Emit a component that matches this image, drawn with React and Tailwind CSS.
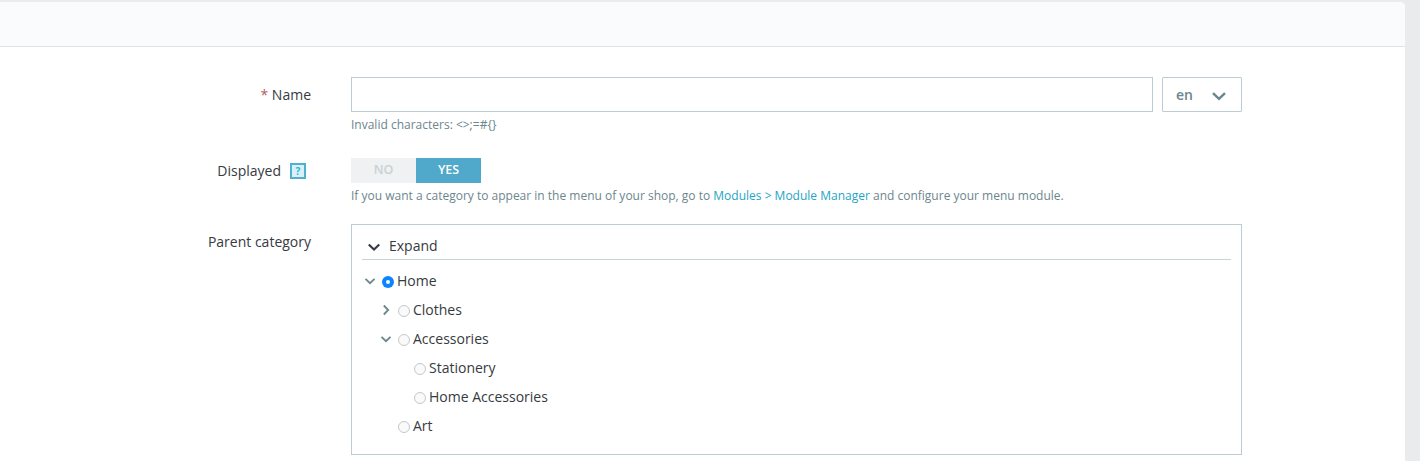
const FONT = "font-['Open_Sans',sans-serif]";

function Chevron({ dir = "down", size = 12, className = "" }) {
  return (
    <svg width={size} height={size} viewBox="0 0 12 12" fill="none" className={className}>
      {dir === "down" ? (
        <path d="M1.5 3.8 6 8.2l4.5-4.4" stroke="currentColor" strokeWidth="1.8" />
      ) : (
        <path d="M3.8 1.5 8.2 6l-4.4 4.5" stroke="currentColor" strokeWidth="1.8" />
      )}
    </svg>
  );
}

function Radio({ checked }) {
  return checked ? (
    <span className="w-3 h-3 mt-[2px] rounded-full bg-[#0a84ff] flex items-center justify-center shrink-0">
      <span className="w-1 h-1 rounded-full bg-white" />
    </span>
  ) : (
    <span className="w-3 h-3 mt-[2px] rounded-full border border-[#c4c8ca] bg-[#fafafa] shrink-0" />
  );
}

function TreeRow({ indent, chevron, checked, label }) {
  return (
    <div className={`h-[29px] flex items-center ${indent}`}>
      <span className="w-[12px] mr-[6px] shrink-0 flex justify-center text-[#6c868e]">
        {chevron && <Chevron dir={chevron} />}
      </span>
      <Radio checked={checked} />
      <span className="ml-[3px] text-[14px] text-[#363a41]">{label}</span>
    </div>
  );
}

function Row({ label, className = "", children }) {
  return (
    <div className={`flex ${className}`}>
      <div className="w-[311px] shrink-0 text-right text-[14px] text-[#363a41]">{label}</div>
      <div className="ml-[40px] w-[891px]">{children}</div>
    </div>
  );
}

export default function App() {
  return (
    <div className={`${FONT} w-[1420px] h-[461px] overflow-hidden bg-[#e9ebed] pt-[2px]`}>
      <div className="w-[1405px] h-[459px] bg-white rounded-tr-[5px] overflow-hidden">
        <div className="h-[45px] bg-[#fafbfc] border-b border-[#dbe6e9]" />
        <Row className="mt-[30px]" label={
          <div className="leading-[19px] pt-[8px]"><span className="text-[#b5605f]">*</span> Name</div>
        }>
          <div className="flex">
            <div className="w-[802px] h-[35px] border border-[#bbcdd2] bg-white" />
            <div className="ml-[9px] w-[80px] h-[35px] border border-[#bbcdd2] rounded-[1px] flex items-center pl-[13px] text-[#6c868e]">
              <span className="text-[14px] font-semibold">en</span>
              <Chevron size={16} className="ml-[18px] mt-[3px]" />
            </div>
          </div>
          <p className="mt-[5px] text-[12px] leading-[16px] text-[#6c868e]">{"Invalid characters: <>;=#{}"}</p>
        </Row>
        <Row className="mt-[25px]" label={
          <div className="flex justify-end items-center h-[25px] pr-[5px]">
            <span>Displayed</span>
            <span className="ml-[9px] w-[16px] h-[16px] border-2 border-[#4fb0cf] bg-[#d9f0f7] text-[#25b9d7] text-[10px] font-bold flex items-center justify-center leading-none">?</span>
          </div>
        }>
          <div className="flex h-[25px] w-[130px] text-[12.5px] font-semibold">
            <div className="w-[65px] bg-[#eff1f2] text-[#c7d2d6] flex items-center justify-center">NO</div>
            <div className="w-[65px] bg-[#50a8ca] text-white flex items-center justify-center">YES</div>
          </div>
          <p className="mt-[5px] text-[12px] leading-[16px] text-[#6c868e]">
            If you want a category to appear in the menu of your shop, go to{" "}
            <span className="text-[#25a5c4]">{"Modules > Module Manager"}</span> and configure your menu module.
          </p>
        </Row>
        <Row className="mt-[20px]" label={<div className="leading-[19px] pt-[8px]">Parent category</div>}>
          <div className="w-[891px] h-[231px] border border-[#bbcdd2] pt-[6px] px-[10px]">
            <div className="h-[29px] flex items-center border-b border-[#c9d4d8] text-[#363a41]">
              <Chevron size={14} className="ml-[5px] mt-[4px] text-[#363a41]" />
              <span className="ml-[8px] text-[14px]">Expand</span>
            </div>
            <div className="pt-[6px]">
              <TreeRow indent="pl-[2px]" chevron="down" checked label="Home" />
              <TreeRow indent="pl-[18px]" chevron="right" label="Clothes" />
              <TreeRow indent="pl-[18px]" chevron="down" label="Accessories" />
              <TreeRow indent="pl-[34px]" label="Stationery" />
              <TreeRow indent="pl-[34px]" label="Home Accessories" />
              <TreeRow indent="pl-[18px]" label="Art" />
            </div>
          </div>
        </Row>
      </div>
    </div>
  );
}
